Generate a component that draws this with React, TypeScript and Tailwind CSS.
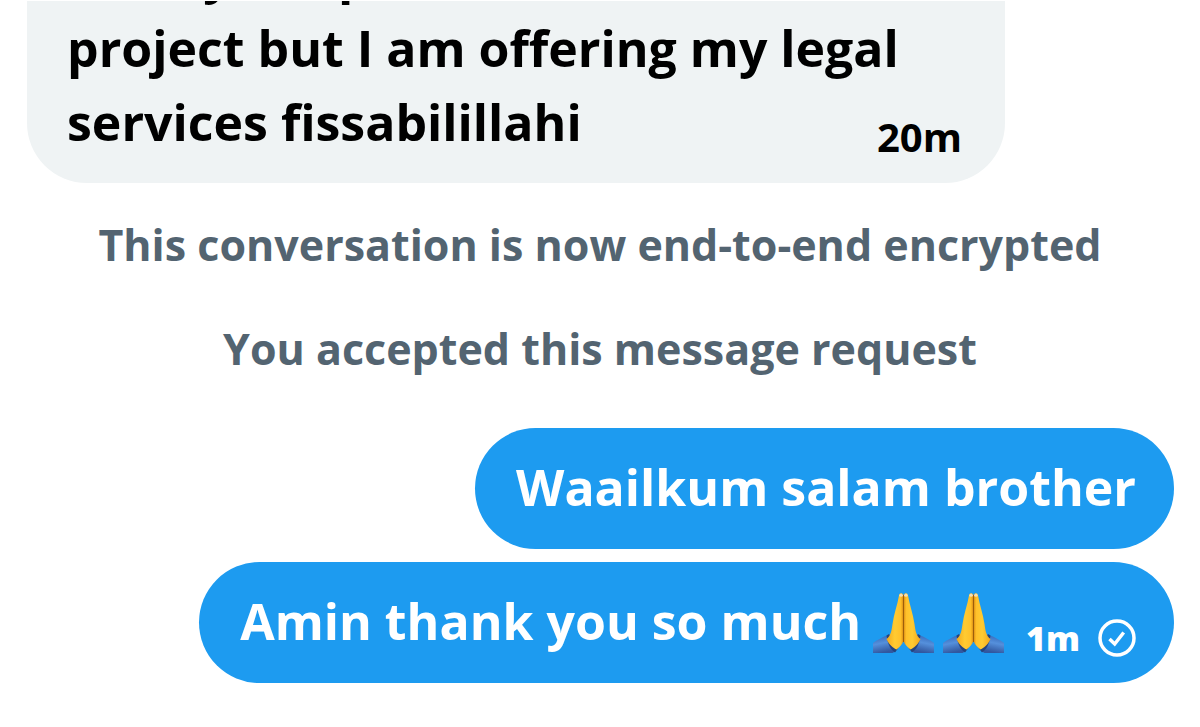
import type { ReactNode } from "react";

function PrayingHands({ id }: { id: string }) {
  return (
    <svg viewBox="0 0 61 62" className="h-[62px] w-[61px]" role="img" aria-label="Folded hands">
      <defs>
        <linearGradient id={`${id}-hand`} gradientUnits="userSpaceOnUse" x1="13" x2="30.5" y1="0" y2="0">
          <stop offset="0" stopColor="#f2a51a" />
          <stop offset="0.5" stopColor="#ffcb32" />
          <stop offset="0.85" stopColor="#ffc02a" />
          <stop offset="1" stopColor="#d98a10" />
        </linearGradient>
        <linearGradient id={`${id}-sleeve`} x1="0" x2="0.3" y1="0" y2="1">
          <stop offset="0" stopColor="#2f62b4" />
          <stop offset="0.5" stopColor="#5590dc" />
          <stop offset="1" stopColor="#31579f" />
        </linearGradient>
        <g id={`${id}-half`}>
          <path d="M13.500 43.500C9 45.500 4 48 0 51v10h19.500c2.500-1 4-3 5.500-5Z" fill={`url(#${id}-sleeve)`} />
          <path d="M13.500 43.500 16 42l10 13-4 5.500c-4-3-7-7-8.500-17Z" fill="#25437e" />
          <path
            d="M26 3.500C26.300 0.500 30 0.500 30.500 3.500V49c-1.500 4-4 6-7 8.500-4-2-7.500-5-10-10.500 4.500-3.500 5-8 6-15C20.800 22 24.500 13 26 3.500Z"
            fill={`url(#${id}-hand)`}
          />
          <path d="M26.200 4c.2-3.500 3.600-3.500 3.800 0-.8 1-3 1-3.800 0Z" fill="#f3dfb8" />
        </g>
      </defs>
      <use href={`#${id}-half`} />
      <use href={`#${id}-half`} transform="matrix(-1 0 0 1 61 0)" />
      <path d="M30.500 3v47" stroke="#9c5d0c" strokeWidth="1" />
    </svg>
  );
}

function SentBubble({ children }: { children: ReactNode }) {
  return (
    <div className="flex min-h-[121px] items-center rounded-[61px] bg-[#1d9bf0] pl-[41px] pr-[38px] text-white">
      {children}
    </div>
  );
}

export default function App() {
  return (
    <main className="min-h-screen overflow-hidden bg-white pt-px font-['Open_Sans','Noto_Sans',sans-serif] text-[50px] font-bold leading-[74px]">
      <div className="overflow-hidden pl-[27px] pr-[26px]">
        <div className="-mt-16 flex w-[978px] max-w-full items-end justify-between rounded-b-[60px] bg-[#eff3f4] pb-6 pl-10 pr-[43px] text-black">
          <p>
            Finally I hope to see this
            <br />
            project but I am offering my legal
            <br />
            services fissabilillahi
          </p>
          <time className="-ml-24 text-[40px] leading-[44px]">20m</time>
        </div>
      </div>
      <p className="mt-8 text-center text-[43px] leading-[60px] text-[#536471]">
        This conversation is now end-to-end encrypted
      </p>
      <p className="mt-11 text-center text-[43px] leading-[60px] text-[#536471]">
        You accepted this message request
      </p>
      <div className="mt-[49px] flex flex-col items-end gap-[13px] pr-[26px]">
        <SentBubble>
          <p className="pb-1">Waailkum salam brother</p>
        </SentBubble>
        <SentBubble>
          <p className="pb-1">Amin thank you so much</p>
          <span className="ml-3 flex gap-[9px]">
            <PrayingHands id="first" />
            <PrayingHands id="second" />
          </span>
          <time className="ml-[22px] mt-[30px] text-[34px] font-extrabold leading-[44px]">1m</time>
          <svg viewBox="0 0 38 38" className="ml-[18px] mt-[30px] h-[38px] w-[38px]" fill="none" stroke="currentColor" role="img" aria-label="Sent">
            <circle cx="19" cy="19" r="17" strokeWidth="3.500" />
            <path d="m11.500 20 5.200 5 9-11.500" strokeWidth="3.500" />
          </svg>
        </SentBubble>
      </div>
    </main>
  );
}
